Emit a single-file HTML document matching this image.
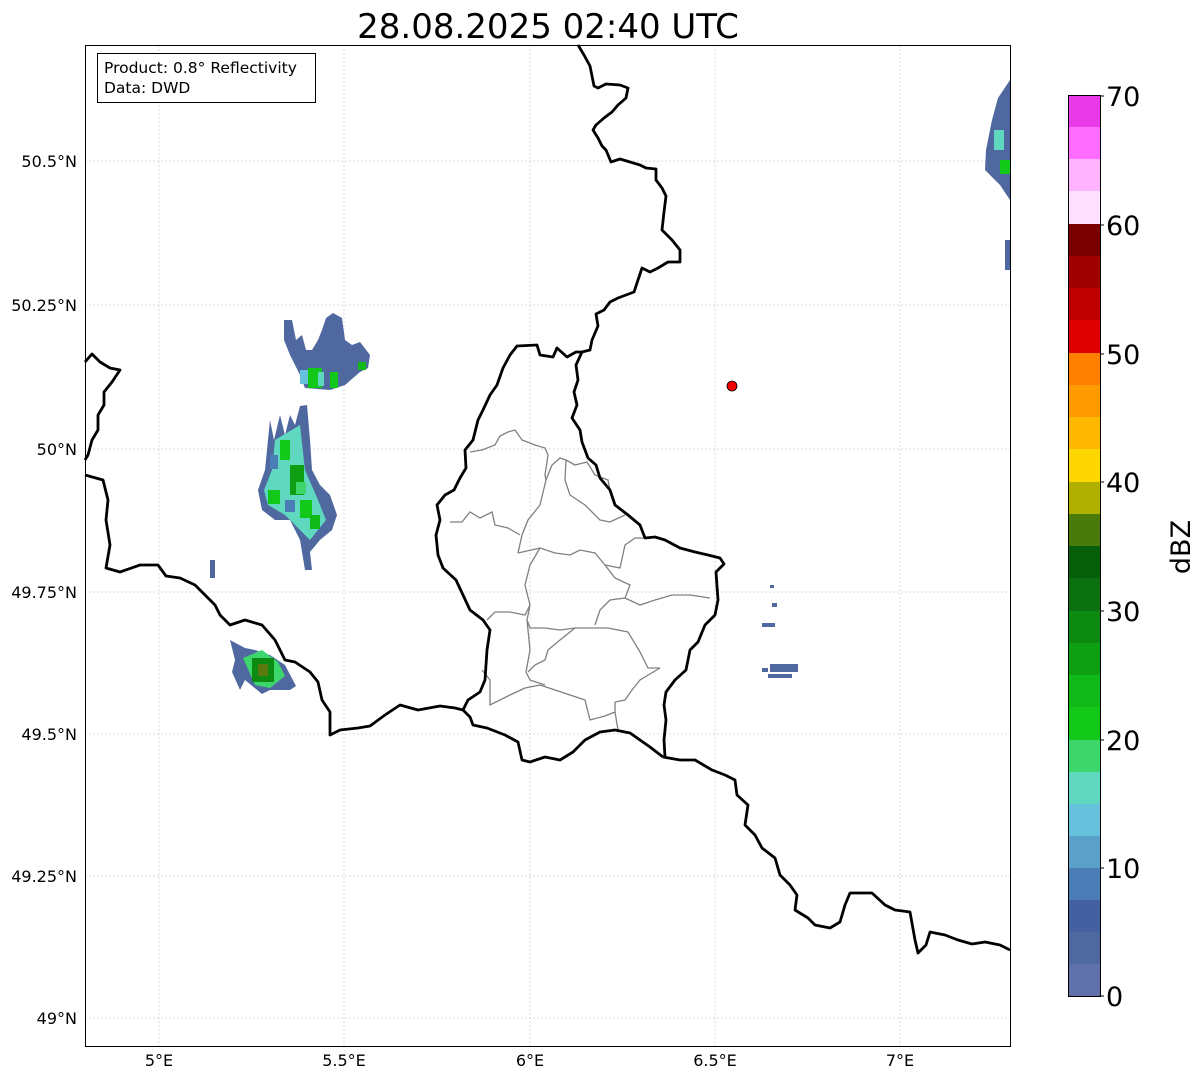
<!DOCTYPE html>
<html><head><meta charset="utf-8"><style>
html,body{margin:0;padding:0;background:#fff;}
svg{display:block;font-family:"DejaVu Sans","Liberation Sans",sans-serif;}
</style></head><body>
<svg width="1202" height="1081" viewBox="0 0 1202 1081" xmlns="http://www.w3.org/2000/svg">
<rect width="1202" height="1081" fill="#fff"/>
<text x="548" y="38" font-size="34" text-anchor="middle" fill="#000">28.08.2025 02:40 UTC</text>
<g stroke="#b8b8b8" stroke-width="0.5" stroke-dasharray="2,2">
<line x1="159" y1="45" x2="159" y2="1046"/><line x1="344" y1="45" x2="344" y2="1046"/><line x1="530" y1="45" x2="530" y2="1046"/><line x1="715" y1="45" x2="715" y2="1046"/><line x1="900" y1="45" x2="900" y2="1046"/>
<line x1="85" y1="161" x2="1010" y2="161"/><line x1="85" y1="305" x2="1010" y2="305"/><line x1="85" y1="449" x2="1010" y2="449"/><line x1="85" y1="592" x2="1010" y2="592"/><line x1="85" y1="734" x2="1010" y2="734"/><line x1="85" y1="876" x2="1010" y2="876"/><line x1="85" y1="1018" x2="1010" y2="1018"/>
</g>
<!-- radar echoes -->
<g>
<polygon points="284,320 292,320 296,340 302,335 306,350 312,350 318,340 322,330 326,318 333,313 342,318 345,340 352,345 360,342 370,355 368,368 360,372 345,385 330,390 305,388 300,375 290,355 284,340" fill="#5068a0"/>
<rect x="308" y="368" width="14" height="20" fill="#12c818"/><rect x="330" y="372" width="8" height="16" fill="#12c818"/><rect x="300" y="370" width="8" height="14" fill="#66c2dc"/><rect x="358" y="362" width="8" height="8" fill="#10b818"/><rect x="318" y="372" width="6" height="14" fill="#60d8c0"/>
<polygon points="270,420 274,440 280,415 285,435 290,415 295,425 300,406 307,405 310,440 312,470 320,485 330,495 337,515 332,530 320,540 310,552 312,570 305,570 300,540 290,520 275,520 262,510 258,490 265,470 268,440" fill="#5068a0"/>
<polygon points="275,440 300,425 305,470 318,500 326,520 310,540 300,530 285,515 268,505 264,490 272,470" fill="#60d8c0"/>
<rect x="280" y="440" width="10" height="20" fill="#12c818"/><rect x="290" y="465" width="14" height="30" fill="#0ea012"/><rect x="268" y="490" width="12" height="14" fill="#12c818"/><rect x="300" y="500" width="12" height="18" fill="#12c818"/><rect x="310" y="515" width="10" height="14" fill="#10b818"/><rect x="285" y="500" width="10" height="12" fill="#4a7db5"/><rect x="296" y="482" width="10" height="12" fill="#3dd66d"/><rect x="270" y="455" width="8" height="14" fill="#4a7db5"/>
<rect x="210" y="560" width="5" height="18" fill="#5068a0"/>
<polygon points="230,640 245,648 255,650 270,655 285,665 296,686 290,690 270,690 262,694 245,680 240,690 232,672 235,660" fill="#5068a0"/>
<polygon points="243,658 262,650 278,662 285,676 270,688 255,685" fill="#3dd66d"/>
<rect x="252" y="658" width="22" height="24" fill="#0c8a12"/><rect x="258" y="664" width="10" height="12" fill="#5a7a10"/>
<polygon points="998,98 1010,80 1010,200 1000,185 985,170 986,150 992,120" fill="#5068a0"/>
<rect x="994" y="130" width="10" height="20" fill="#60d8c0"/><rect x="1000" y="160" width="10" height="14" fill="#12c818"/>
<rect x="1005" y="240" width="5" height="30" fill="#5068a0"/>
<g fill="#5068a0"><rect x="770" y="585" width="4" height="3"/><rect x="772" y="603" width="5" height="4"/><rect x="762" y="623" width="13" height="4"/><rect x="762" y="668" width="6" height="4"/><rect x="770" y="664" width="28" height="8"/><rect x="768" y="674" width="24" height="4"/></g>
</g>
<!-- internal lux borders -->
<g fill="none" stroke="#808080" stroke-width="1.3">
<path d="M470,452 L482,450 L495,445 L500,436 L508,432 L515,430 L522,440 L535,445 L545,448 L548,455 L545,475 L546,480"/>
<path d="M546,480 L552,465 L560,458 L566,460 L575,465 L587,462 L595,475 L608,480 L610,490"/>
<path d="M566,460 L565,480 L570,495 L585,505 L600,520 L610,522 L625,515"/>
<path d="M546,480 L540,505 L528,520 L522,535 L518,553"/>
<path d="M450,522 L462,522 L470,512 L480,518 L492,512 L495,525 L508,528 L520,535"/>
<path d="M518,553 L540,548 L555,553 L570,555 L580,550 L595,553 L605,565 L620,568 L625,545 L635,538 L650,538"/>
<path d="M540,548 L530,565 L525,585 L530,605 L525,615 L510,612 L495,612 L487,620"/>
<path d="M605,565 L615,578 L630,585 L625,598 L610,600 L600,610 L595,625"/>
<path d="M530,605 L527,620 L530,628 L545,628 L560,630 L575,628 L595,628 L608,628 L628,632 L640,652 L648,668 L660,668"/>
<path d="M625,598 L640,605 L655,600 L672,595 L690,595 L710,598"/>
<path d="M527,620 L530,650 L526,672 L530,680 L545,685"/>
<path d="M575,628 L560,640 L548,650 L545,660 L535,665 L528,672"/>
<path d="M482,670 L490,680 L490,705 L510,695 L525,688 L540,685 L555,690 L570,695 L585,700 L590,720 L605,716 L615,712 L615,702"/>
<path d="M660,668 L640,680 L632,690 L625,700 L615,702"/>
<path d="M615,712 L618,730"/>
</g>
<!-- national borders -->
<g fill="none" stroke="#000" stroke-width="2.8" stroke-linejoin="round">
<path d="M578,45 L584,55 L590,66 L592,76 L594,86 L598,88 L606,84 L620,85 L628,88 L626,98 L618,105 L612,112 L604,118 L596,125 L593,130 L598,138 L602,146 L606,150 L611,162 L620,159 L630,162 L640,165 L646,168 L656,169 L656,180 L662,188 L666,196 L664,212 L662,230 L672,240 L680,250 L680,262 L668,262 L658,268 L650,272 L642,268 L638,280 L634,292 L618,298 L610,302 L604,310 L596,314 L598,326 L592,340 L590,350 L582,352"/>
<path d="M582,352 L576,352 L567,357 L557,348 L553,357 L540,355 L537,345 L517,346 L510,355 L503,368 L497,385 L490,395 L483,410 L478,420 L473,440 L465,450 L466,468 L460,478 L454,490 L445,495 L437,505 L440,520 L436,535 L438,555 L443,568 L456,580 L463,595 L470,610 L483,620 L490,630 L487,650 L485,680 L480,692 L468,700 L463,710 L470,717 L473,725 L487,728 L505,735 L518,742 L522,760 L530,762 L545,757 L560,760 L573,752 L585,740 L600,732 L615,730 L630,733 L640,740 L650,747 L663,757"/>
<path d="M582,352 L576,365 L578,380 L574,392 L577,405 L572,418 L580,430 L582,442 L588,458 L596,465 L600,478 L610,490 L615,505 L628,515 L640,525 L645,538 L655,537 L665,540 L680,548 L695,552 L708,555 L720,558 L724,564 L716,572 L718,600 L715,615 L705,625 L698,642 L690,650 L686,670 L675,680 L666,692 L664,705 L666,720 L664,740 L665,757"/>
<path d="M663,757 L680,760 L695,760 L712,770 L725,775 L735,780 L737,795 L748,805 L745,825 L755,835 L762,848 L775,858 L780,875 L790,885 L797,895 L795,910 L808,918 L815,925 L830,928 L840,922 L845,905 L850,893 L872,893 L885,905 L895,910 L910,912 L915,940 L918,953 L926,945 L930,932 L945,935 L958,940 L972,944 L985,942 L1000,945 L1010,950"/>
<path d="M85,475 L103,480 L108,500 L106,520 L110,545 L106,568 L120,572 L140,565 L158,565 L166,576 L180,578 L195,585 L205,595 L215,605 L220,615 L230,625 L245,620 L262,625 L275,640 L285,660 L295,662 L310,672 L318,682 L322,700 L330,712 L330,735 L340,730 L358,728 L370,726 L385,715 L400,705 L418,710 L440,706 L455,708 L463,710"/>
<path d="M85,362 L92,354 L100,362 L110,368 L120,370 L112,382 L104,392 L104,405 L98,415 L98,430 L92,440 L88,455 L85,460"/>
</g>
<circle cx="732" cy="386" r="5" fill="#ee0000" stroke="#000" stroke-width="0.8"/>
<rect x="85.5" y="45.5" width="925" height="1001" fill="none" stroke="#000" stroke-width="1"/>
<rect x="97.5" y="53.5" width="218" height="49" fill="#fff" stroke="#000" stroke-width="1"/>
<text x="104" y="73" font-size="15.5">Product: 0.8° Reflectivity</text>
<text x="104" y="93" font-size="15.5">Data: DWD</text>
<g font-size="16" text-anchor="end">
<text x="77" y="167">50.5°N</text><text x="77" y="311">50.25°N</text><text x="77" y="455">50°N</text><text x="77" y="598">49.75°N</text><text x="77" y="740">49.5°N</text><text x="77" y="882">49.25°N</text><text x="77" y="1024">49°N</text>
</g>
<g font-size="16" text-anchor="middle">
<text x="159" y="1066">5°E</text><text x="344" y="1066">5.5°E</text><text x="530" y="1066">6°E</text><text x="715" y="1066">6.5°E</text><text x="900" y="1066">7°E</text>
</g>
<g>
<rect x="1068" y="95" width="32" height="33" fill="#e93ae9"/><rect x="1068" y="127" width="32" height="33" fill="#ff6cff"/><rect x="1068" y="159" width="32" height="33" fill="#ffb3ff"/><rect x="1068" y="191" width="32" height="34" fill="#ffe0ff"/>
<rect x="1068" y="224" width="32" height="33" fill="#7a0000"/><rect x="1068" y="256" width="32" height="33" fill="#a00000"/><rect x="1068" y="288" width="32" height="33" fill="#c00000"/><rect x="1068" y="320" width="32" height="34" fill="#e00000"/>
<rect x="1068" y="353" width="32" height="33" fill="#ff7f00"/><rect x="1068" y="385" width="32" height="33" fill="#ff9a00"/><rect x="1068" y="417" width="32" height="33" fill="#ffb700"/><rect x="1068" y="449" width="32" height="34" fill="#ffd700"/>
<rect x="1068" y="482" width="32" height="33" fill="#b0b000"/><rect x="1068" y="514" width="32" height="33" fill="#4a7a0a"/><rect x="1068" y="546" width="32" height="33" fill="#055e0a"/><rect x="1068" y="578" width="32" height="34" fill="#0a7010"/>
<rect x="1068" y="611" width="32" height="33" fill="#0c8a12"/><rect x="1068" y="643" width="32" height="33" fill="#0ea012"/><rect x="1068" y="675" width="32" height="33" fill="#10b818"/><rect x="1068" y="707" width="32" height="34" fill="#12c818"/>
<rect x="1068" y="740" width="32" height="33" fill="#3dd66d"/><rect x="1068" y="772" width="32" height="33" fill="#60d8c0"/><rect x="1068" y="804" width="32" height="33" fill="#66c2dc"/><rect x="1068" y="836" width="32" height="33" fill="#5ba0c8"/>
<rect x="1068" y="868" width="32" height="33" fill="#4a7db5"/><rect x="1068" y="900" width="32" height="33" fill="#4560a0"/><rect x="1068" y="932" width="32" height="33" fill="#5068a0"/><rect x="1068" y="964" width="32" height="32" fill="#6070a8"/>
<rect x="1068.5" y="95.5" width="32" height="901" fill="none" stroke="#000" stroke-width="1"/>
</g>
<g font-size="27">
<text x="1106" y="106">70</text><text x="1106" y="235">60</text><text x="1106" y="364">50</text><text x="1106" y="492">40</text><text x="1106" y="621">30</text><text x="1106" y="750">20</text><text x="1106" y="878">10</text><text x="1106" y="1006">0</text>
</g>
<g stroke="#000" stroke-width="1"><line x1="1100" y1="96" x2="1104" y2="96"/><line x1="1100" y1="225" x2="1104" y2="225"/><line x1="1100" y1="354" x2="1104" y2="354"/><line x1="1100" y1="482" x2="1104" y2="482"/><line x1="1100" y1="611" x2="1104" y2="611"/><line x1="1100" y1="740" x2="1104" y2="740"/><line x1="1100" y1="868" x2="1104" y2="868"/><line x1="1100" y1="996" x2="1104" y2="996"/></g>
<text transform="translate(1190,547) rotate(-90)" font-size="27" text-anchor="middle">dBZ</text>
</svg>
</body></html>
